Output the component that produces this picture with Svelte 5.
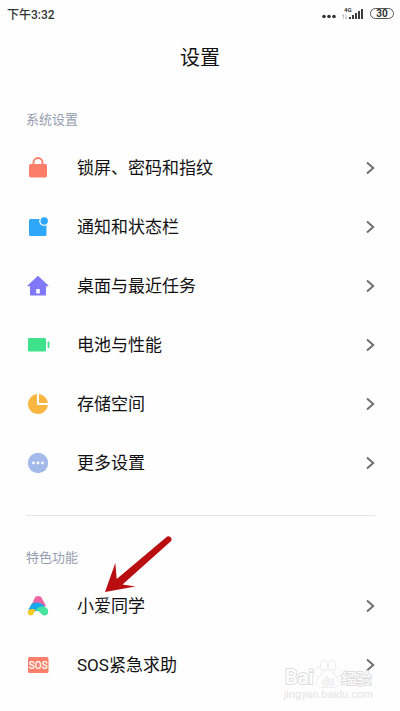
<script>
  const sections = [
    {
      title: '系统设置',
      items: [
        { icon: 'lock', label: '锁屏、密码和指纹' },
        { icon: 'notify', label: '通知和状态栏' },
        { icon: 'home', label: '桌面与最近任务' },
        { icon: 'battery', label: '电池与性能' },
        { icon: 'storage', label: '存储空间' },
        { icon: 'more', label: '更多设置' }
      ]
    },
    {
      title: '特色功能',
      items: [
        { icon: 'assistant', label: '小爱同学' },
        { icon: 'sos', label: 'SOS紧急求助' }
      ]
    }
  ];
</script>

{#snippet glyph(name)}
  <svg class="icon" viewBox="0 0 24 24" aria-hidden="true">
    {#if name === 'lock'}
      <path d="M7.500 10V6.500a4.500 4.500 0 0 1 9 0V10" fill="none" stroke="#fc7e68" stroke-width="1.900" />
      <rect x="3" y="8" width="18" height="13.500" rx="1.800" fill="#fc7e68" />
    {:else if name === 'notify'}
      <rect x="3" y="4" width="17.500" height="17" rx="1.600" fill="#2ea7fb" />
      <circle cx="18.200" cy="6" r="5" fill="#fff" />
      <circle cx="18.200" cy="6" r="3.700" fill="#2ea7fb" />
    {:else if name === 'home'}
      <path d="M12 1.800 22.200 11.300a.5.5 0 0 1-.4.9H20V20.400a1.200 1.200 0 0 1-1.200 1.200H5.200A1.200 1.200 0 0 1 4 20.400V12.200H2.200a.5.5 0 0 1-.4-.9Z" fill="#8078f8" />
      <rect x="10.200" y="15" width="3.600" height="4.500" rx=".5" fill="#fff" />
    {:else if name === 'battery'}
      <rect x="2" y="5" width="18" height="13.500" rx="1.300" fill="#3de28b" />
      <rect x="21.600" y="8.500" width="1.800" height="6.500" rx=".8" fill="#3de28b" />
    {:else if name === 'storage'}
      <path d="M11 2.100a10 10 0 1 0 10.900 10.900H11Z" fill="#f9b640" />
      <path d="M13 2.100A10 10 0 0 1 21.900 11H13Z" fill="#f9b640" />
    {:else if name === 'more'}
      <circle cx="12" cy="12" r="10.200" fill="#a3b9e9" />
      <circle cx="7.500" cy="12" r="1.400" fill="#fff" />
      <circle cx="12" cy="12" r="1.400" fill="#fff" />
      <circle cx="16.500" cy="12" r="1.400" fill="#fff" />
    {:else if name === 'assistant'}
      <path d="M8.500 4.500C10 1.300 14.500 1.300 16 4.500L20 12 12 14 5.500 11Z" fill="#ee63a2" />
      <path d="M5.500 10C9.500 7.500 15.500 8 18.500 12.500L20 16 12 17C9 16.500 7.500 18 6 20L2.300 16Z" fill="#18a8f0" />
      <path d="M2.200 17C3.500 14.800 6.500 14.500 10 16 8 18 7.500 21.500 4.800 21.500A2.900 2.900 0 0 1 2.200 17Z" fill="#f8cb24" />
      <path d="M10 15.800C12 12.500 17 11.500 20.300 13.800 23.500 16.500 22.500 21.500 18.700 21.500 15 21.500 13.500 16.500 10 15.800Z" fill="#45e39e" />
    {:else}
      <rect x="2" y="4" width="20.500" height="16" rx="1.500" fill="#fb8069" />
      <text x="12.200" y="15.500" text-anchor="middle" class="sos">SOS</text>
    {/if}
  </svg>
{/snippet}

<div class="screen">
  <header class="status">
    <time>下午3:32</time>
    <div class="signals">
      <svg class="dots" width="14" height="6" viewBox="0 0 14 6" aria-hidden="true" fill="#333">
        <circle cx="2" cy="3.500" r="1.800" /><circle cx="7" cy="3.500" r="1.800" /><circle cx="12" cy="3.500" r="1.800" />
      </svg>
      <svg width="22" height="14" viewBox="0 0 22 14" aria-label="4G">
        <text x="2" y="5" class="net">4G</text>
        <path d="M1.500 12V7.500L.5 9M3.800 7.500V12L4.800 10.500" fill="none" stroke="#aaa" stroke-width=".7" />
        <path d="M8 12V10M11 12V8M14 12V6M17 12V4M20 12V2" stroke="#333" stroke-width="1.900" />
      </svg>
      <span class="charge">30</span>
    </div>
  </header>

  <h1>设置</h1>

  <main>
    {#each sections as section}
      <section>
        <h2>{section.title}</h2>
        <ul>
          {#each section.items as item}
            <li>
              <a href="#{item.icon}">
                {@render glyph(item.icon)}
                <span class="label">{item.label}</span>
                <svg class="chevron" viewBox="0 0 10 14" aria-hidden="true">
                  <path d="M2 1.500 8.200 7 2 12.500" fill="none" stroke="#707070" stroke-width="2" />
                </svg>
              </a>
              {#if item.icon === 'assistant'}
                <svg class="pointer" viewBox="0 0 70 60" aria-hidden="true">
                  <path d="M3 57 13.300 28 14.700 44 64.300 2.300A3 3 0 0 1 68.600 6.500L20.500 49.500 33.500 51.500Z" fill="#b90d0f" />
                </svg>
              {/if}
            </li>
          {/each}
        </ul>
      </section>
    {/each}
  </main>

  <div class="watermark">
    <div class="brand">
      <span class="latin">Bai</span>
      <svg width="28" height="30" viewBox="0 0 28 30" fill="#fff" stroke="#dedede" stroke-width="1">
        <ellipse cx="4" cy="13" rx="3" ry="4.200" />
        <ellipse cx="10" cy="6" rx="3.300" ry="4.600" />
        <ellipse cx="18" cy="6" rx="3.300" ry="4.600" />
        <ellipse cx="24" cy="13.500" rx="3" ry="4.200" />
        <path d="M14 11C10 11 10 15 6 18 1 22 3 28 8 28H20C25 28 27 22 22 18 18 15 18 11 14 11Z" />
        <text x="14" y="25.500" text-anchor="middle" class="du">du</text>
      </svg>
      <span>经验</span>
    </div>
    <div class="site">jingyan.baidu.com</div>
  </div>
</div>

<style>
  :global(body) {
    margin: 0;
    background: #fefefe;
  }
  .screen {
    position: relative;
    font-family: Roboto, "Noto Sans CJK SC", sans-serif;
    color: #111;
    padding-bottom: 17px;
  }
  .status {
    display: flex;
    justify-content: space-between;
    align-items: center;
    height: 27px;
    padding: 0 6px 0 7px;
  }
  time {
    font-size: 12px;
    font-weight: 500;
    color: #333;
  }
  .signals {
    display: flex;
    align-items: center;
    gap: 6px;
  }
  .dots {
    margin-top: 4px;
  }
  .net {
    font-size: 6px;
    font-weight: 700;
    fill: #333;
  }
  .charge {
    box-sizing: border-box;
    width: 24px;
    height: 11px;
    border: 1px solid #555;
    border-radius: 6px;
    font-size: 10px;
    line-height: 9px;
    font-weight: 700;
    text-align: center;
    color: #333;
  }
  h1 {
    margin: 0;
    padding: 16px 0 15px;
    font-size: 20px;
    line-height: 30px;
    font-weight: 400;
    text-align: center;
  }
  main {
    padding: 0 25px 0 26px;
  }
  section {
    padding-top: 22px;
  }
  section + section {
    margin-top: 23px;
    padding-top: 32px;
    border-top: 1px solid #e4e4e4;
  }
  h2 {
    margin: 0;
    padding-bottom: 8px;
    font-size: 13px;
    line-height: 20px;
    font-weight: 400;
    color: #979db1;
  }
  ul {
    list-style: none;
    margin: 0;
    padding: 0;
  }
  li {
    position: relative;
  }
  a {
    display: flex;
    align-items: center;
    height: 59px;
    color: inherit;
    text-decoration: none;
  }
  .icon {
    width: 24px;
    height: 24px;
    margin-right: 27px;
  }
  .sos {
    font-size: 10px;
    font-weight: 500;
    fill: #fff;
  }
  .label {
    flex: 1;
    font-size: 17px;
    line-height: 24px;
  }
  .chevron {
    width: 10px;
    height: 14px;
  }
  .pointer {
    position: absolute;
    left: 76px;
    top: -41px;
    width: 70px;
    height: 60px;
  }
  .watermark {
    position: absolute;
    right: 27px;
    bottom: 10px;
    pointer-events: none;
    text-align: center;
    color: #fff;
    paint-order: stroke fill;
    -webkit-text-stroke: 2px #dedede;
  }
  .brand {
    display: flex;
    align-items: flex-end;
    justify-content: center;
    font-size: 15px;
    line-height: 20px;
    height: 30px;
  }
  .latin {
    font-size: 20px;
    font-weight: 500;
    line-height: 24px;
  }
  .du {
    font-size: 11px;
  }
  .site {
    font-size: 11px;
    line-height: 12px;
    color: #e4e4e4;
    -webkit-text-stroke: 0;
  }
</style>
